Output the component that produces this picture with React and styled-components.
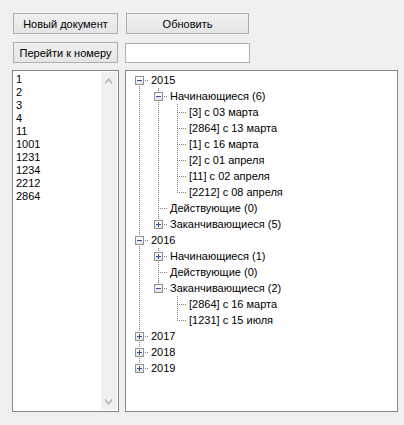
import React, { useState } from "react";
import styled, { createGlobalStyle, css } from "styled-components";

const GlobalStyle = createGlobalStyle`
  *, *::before, *::after { box-sizing: border-box; }
  body {
    margin: 0;
    background: #f0f0f0;
    color: #000;
    font: 11px/16px "Liberation Sans", Arial, sans-serif;
  }
`;

const Window = styled.main`
  display: flex;
  flex-direction: column;
  gap: 7px;
  min-height: 100vh;
  padding: 13px 6px 13px 12px;
`;

const Toolbar = styled.form`
  display: grid;
  grid-template-columns: 105px 123px;
  gap: 8px;
  padding-left: 1px;
`;

const PushButton = styled.button`
  height: 21px;
  padding: 0;
  border: 1px solid #adadad;
  background: linear-gradient(#f0f0f0, #e5e5e5);
  color: inherit;
  font: inherit;
  font-size: 11px;
  white-space: nowrap;
`;

const NumberInput = styled.input`
  align-self: end;
  height: 20px;
  margin: 0 -1px;
  padding: 0 3px;
  border: 1px solid #abadb3;
  background: #fff;
  font: inherit;
  outline: none;
`;

const Panels = styled.div`
  display: grid;
  flex: 1;
  grid-template-columns: 107px minmax(0, 1fr);
  gap: 6px;
`;

const panelFrame = css`
  border: 1px solid #828790;
  background: #fff;
`;

const ListPanel = styled.section`
  ${panelFrame}
  display: flex;
  padding: 1px;
`;

const NumberList = styled.select`
  flex: 1;
  min-width: 0;
  padding: 1px 0 0;
  border: 0;
  border-radius: 0;
  background: #fff;
  color: inherit;
  font: inherit;
  outline: none;
  overflow: hidden;

  option {
    height: 13px;
    min-height: 13px;
    padding: 0 2px;
    line-height: 13px;
  }
`;

const ScrollTrack = styled.div`
  display: flex;
  flex-direction: column;
  justify-content: space-between;
  width: 16px;
  background: #f0f0f0;
`;

const ScrollButton = styled.button`
  display: grid;
  place-items: center;
  width: 15px;
  height: 17px;
  padding: 0;
  border: 0;
  background: none;
`;

const TreePanel = styled.section`
  ${panelFrame}
  padding: 1px 4px;
`;

const Branch = styled.ul`
  margin: 0;
  padding: 0;
  list-style: none;
`;

const dots = "#808080 0 1px, transparent 1px 2px";

const Node = styled.li`
  display: grid;
  grid-template-columns: 19px minmax(0, 1fr);
`;

const Gutter = styled.div`
  display: flex;
  align-items: flex-start;
  padding: 4px 5px 0;
  background:
    repeating-linear-gradient(90deg, ${dots}) 9px 8px / 9px 1px no-repeat,
    repeating-linear-gradient(${dots}) 9px ${(p) => (p.$first ? "8px" : "0")} /
      1px ${(p) => (p.$last ? "8px" : "100%")} no-repeat;
`;

const Toggle = styled.button`
  display: block;
  width: 9px;
  height: 9px;
  padding: 0;
  border: 0;
  background: #fff;

  svg { display: block; }
`;

const Label = styled.div`
  height: 16px;
  padding-left: 2px;
  white-space: nowrap;
`;

const numbers = ["1", "2", "3", "4", "11", "1001", "1231", "1234", "2212", "2864"];

const documents = [
  {
    label: "2015",
    open: true,
    children: [
      {
        label: "Начинающиеся (6)",
        open: true,
        children: [
          { label: "[3] с 03 марта" },
          { label: "[2864] с 13 марта" },
          { label: "[1] с 16 марта" },
          { label: "[2] с 01 апреля" },
          { label: "[11] с 02 апреля" },
          { label: "[2212] с 08 апреля" },
        ],
      },
      { label: "Действующие (0)" },
      { label: "Заканчивающиеся (5)", children: [] },
    ],
  },
  {
    label: "2016",
    open: true,
    children: [
      { label: "Начинающиеся (1)", children: [] },
      { label: "Действующие (0)" },
      {
        label: "Заканчивающиеся (2)",
        open: true,
        children: [{ label: "[2864] с 16 марта" }, { label: "[1231] с 15 июля" }],
      },
    ],
  },
  { label: "2017", children: [] },
  { label: "2018", children: [] },
  { label: "2019", children: [] },
];

function ToggleIcon({ open }) {
  return (
    <svg width="9" height="9" viewBox="0 0 9 9" shapeRendering="crispEdges" aria-hidden="true">
      <path d="M0 0h9v9H0z" fill="#919191" />
      <path d="M1 1h7v7H1z" fill="#f8f8f8" />
      <path d="M1 5h7v3H1z" fill="#e6e6e6" />
      <path d={open ? "M2 4h5v1H2z" : "M2 4h5v1H2zM4 2h1v5H4z"} fill="#3050a0" />
    </svg>
  );
}

function ScrollArrow({ down }) {
  return (
    <svg width="7" height="6" viewBox="0 0 7 6" shapeRendering="crispEdges" aria-hidden="true">
      <path
        d={
          down
            ? "M0 0h1v1h1v1h1v1h1V2h1V1h1V0h1v3H6v1H5v1H4v1H3V5H2V4H1V3H0z"
            : "M3 0h1v1h1v1h1v1h1v3H6V5H5V4H4V3H3v1H2v1H1v1H0V3h1V2h1V1h1z"
        }
        fill="#bfbfbf"
      />
    </svg>
  );
}

function TreeNode({ node, first, last }) {
  const [open, setOpen] = useState(Boolean(node.open));
  return (
    <Node role="treeitem" aria-expanded={node.children ? open : undefined}>
      <Gutter $first={first} $last={last}>
        {node.children && (
          <Toggle type="button" aria-label={node.label} onClick={() => setOpen(!open)}>
            <ToggleIcon open={open} />
          </Toggle>
        )}
      </Gutter>
      <div>
        <Label>{node.label}</Label>
        {open && <TreeBranch nodes={node.children} role="group" />}
      </div>
    </Node>
  );
}

function TreeBranch({ nodes, root, ...rest }) {
  return (
    <Branch {...rest}>
      {nodes.map((node, i) => (
        <TreeNode
          key={node.label}
          node={node}
          first={root && i === 0}
          last={i === nodes.length - 1}
        />
      ))}
    </Branch>
  );
}

export default function App() {
  return (
    <>
      <GlobalStyle />
      <Window>
        <Toolbar onSubmit={(e) => e.preventDefault()}>
          <PushButton type="button">Новый документ</PushButton>
          <PushButton type="button">Обновить</PushButton>
          <PushButton type="submit">Перейти к номеру</PushButton>
          <NumberInput type="text" aria-label="Номер документа" />
        </Toolbar>
        <Panels>
          <ListPanel>
            <NumberList size={numbers.length} aria-label="Номера документов">
              {numbers.map((n) => (
                <option key={n}>{n}</option>
              ))}
            </NumberList>
            <ScrollTrack>
              <ScrollButton type="button" aria-label="Вверх">
                <ScrollArrow />
              </ScrollButton>
              <ScrollButton type="button" aria-label="Вниз">
                <ScrollArrow down />
              </ScrollButton>
            </ScrollTrack>
          </ListPanel>
          <TreePanel>
            <TreeBranch nodes={documents} root role="tree" aria-label="Документы" />
          </TreePanel>
        </Panels>
      </Window>
    </>
  );
}
